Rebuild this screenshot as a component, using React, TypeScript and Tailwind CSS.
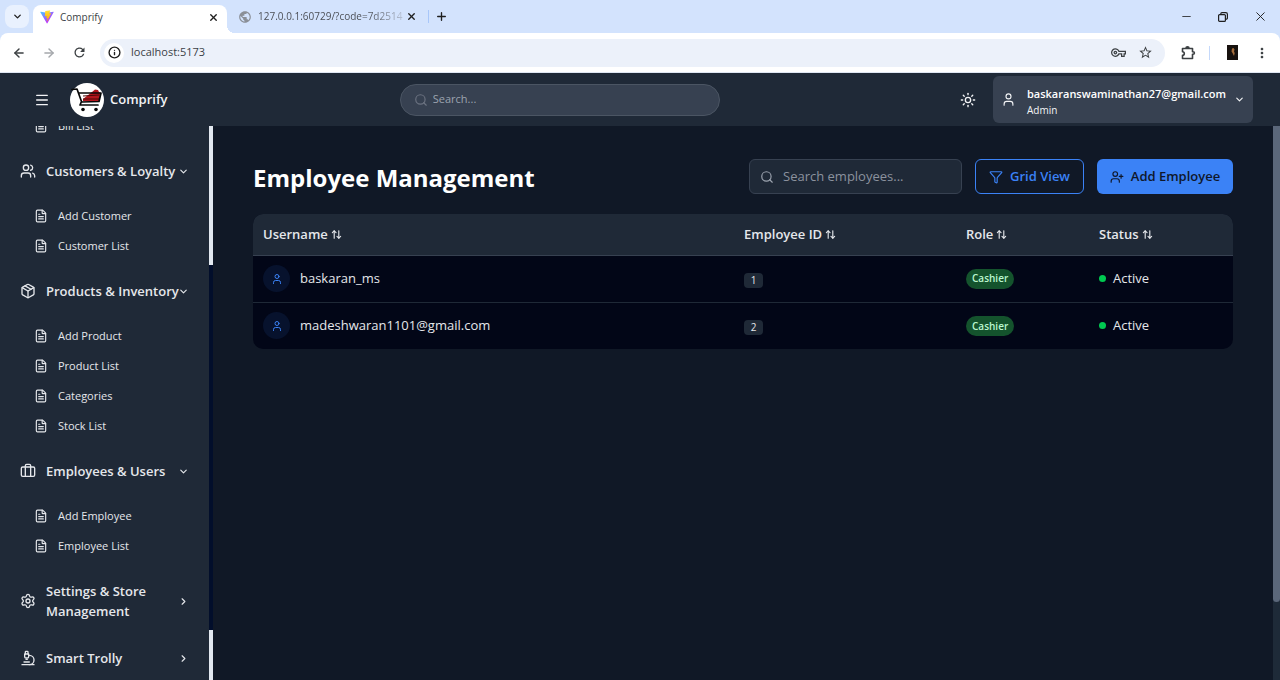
import type { ReactNode } from 'react';
import {
  ArrowLeft,
  ArrowRight,
  ArrowUpDown,
  Briefcase,
  ChevronDown,
  ChevronRight,
  FileText,
  Funnel,
  Info,
  Menu,
  Microscope,
  Minus,
  Package,
  Plus,
  Search,
  Settings,
  Sun,
  User,
  UserPlus,
  Users,
  X,
} from 'lucide-react';
import type { LucideIcon } from 'lucide-react';
import { MdOutlineVpnKey, MdPublic, MdRefresh, MdStarOutline, MdMoreVert } from 'react-icons/md';

function ViteLogo() {
  return (
    <svg viewBox="0 0 410 404" className="size-[14px] shrink-0" aria-hidden="true">
      <defs>
        <linearGradient id="vite-body" x1="6" y1="33" x2="235" y2="344" gradientUnits="userSpaceOnUse">
          <stop stopColor="#41d1ff" />
          <stop offset="1" stopColor="#bd34fe" />
        </linearGradient>
        <linearGradient id="vite-bolt" x1="194" y1="9" x2="236" y2="293" gradientUnits="userSpaceOnUse">
          <stop stopColor="#ffea83" />
          <stop offset="0.1" stopColor="#ffdd35" />
          <stop offset="1" stopColor="#ffa800" />
        </linearGradient>
      </defs>
      <path
        fill="url(#vite-body)"
        d="M399.641 59.525 215.643 388.545c-3.799 6.793-13.559 6.833-17.415.073L10.582 59.556C6.38 52.19 12.68 43.266 21.028 44.76l184.195 32.923c1.175.21 2.378.208 3.553-.006l180.343-32.87c8.32-1.517 14.649 7.337 10.522 14.718Z"
      />
      <path
        fill="url(#vite-bolt)"
        d="M292.965 1.574 156.801 28.255a5 5 0 0 0-4.03 4.611l-8.376 141.464c-.197 3.332 2.863 5.918 6.115 5.168l37.91-8.749c3.547-.818 6.752 2.306 6.023 5.873l-11.263 55.153c-.758 3.712 2.727 6.886 6.352 5.785l23.415-7.114c3.63-1.102 7.118 2.081 6.35 5.796l-17.899 86.633c-1.12 5.419 6.088 8.374 9.094 3.728l2.008-3.103 110.954-221.428c1.858-3.707-1.346-7.935-5.418-7.15l-39.022 7.532c-3.667.707-6.787-2.708-5.752-6.296l25.469-88.291c1.036-3.594-2.095-7.012-5.766-6.293Z"
      />
    </svg>
  );
}

function CartLogo() {
  return (
    <svg viewBox="0 0 34 34" className="size-[34px] shrink-0" aria-hidden="true">
      <circle cx="17" cy="17" r="17" fill="#fff" />
      <path d="m13 16 9-7 3-2.500 3 .5 1 2 2 1-2 9-16-1Z" fill="#b3161d" />
      <path d="m13 13 16-1M13 16h16" stroke="#4d0808" strokeWidth="1" />
      <g fill="none" stroke="#080808" strokeWidth="1.700" strokeLinecap="round" strokeLinejoin="round">
        <path d="M2 6.500 7 6l4.500 12.500-1.500 3.500h18" />
        <path d="M9 10h22l-2 8.500-17 .5" />
      </g>
      <circle cx="13" cy="26.500" r="1.800" fill="#080808" />
      <circle cx="26" cy="26.500" r="1.800" fill="#080808" />
    </svg>
  );
}

function ExtensionIcon() {
  return (
    <svg viewBox="0 0 16 16" className="ml-[15px] size-4 text-[#3c4043]" fill="none" stroke="currentColor" strokeWidth="1.600" strokeLinejoin="round" aria-hidden="true">
      <path d="M2.500 3.500h10v3.200h.6a1.300 1.300 0 0 1 0 2.600h-.6v4.200h-10v-3.200a1.800 1.800 0 0 0 0-3.600Z" />
      <path d="M6 3.200a1.500 1.500 0 0 1 3 0" fill="currentColor" />
    </svg>
  );
}

function BrowserChrome() {
  return (
    <div className="shrink-0 bg-[#d3e3fd] text-[#1f1f1f]">
      <div className="flex h-[33px] items-end">
        <button aria-label="Search tabs" className="mb-[5px] ml-[5px] grid h-[23px] w-6 place-items-center rounded-lg bg-[#e9f1fe]">
          <ChevronDown className="size-[11px]" strokeWidth={3} />
        </button>
        <div className="ml-1 flex h-[28px] w-[194px] items-center rounded-t-lg bg-white pr-[6px] pb-1 pl-[7px]">
          <ViteLogo />
          <span className="ml-[6px] flex-1 text-[10px] text-[#3b3f46]">Comprify</span>
          <button aria-label="Close Comprify tab" className="grid size-4 place-items-center">
            <X className="size-[11px]" strokeWidth={3} />
          </button>
        </div>
        <div className="size-2 bg-[radial-gradient(circle_at_top_right,#d3e3fd_8px,#ffffff_8px)]" />
        <div className="flex h-[33px] w-[193px] items-center pr-[9px] pl-[3px]">
          <MdPublic className="size-[14px] shrink-0 text-[#8a8f97]" />
          <span className="ml-[6px] flex-1 bg-gradient-to-r from-[#474a50] from-75% to-[#b9c4d8] bg-clip-text text-[10px] whitespace-nowrap text-transparent">
            127.0.0.1:60729/?code=7d2514
          </span>
          <button aria-label="Close second tab" className="grid size-4 place-items-center">
            <X className="size-[11px]" strokeWidth={3} />
          </button>
        </div>
        <div className="mb-[10px] h-[13px] w-px bg-[#a8c7fa]" />
        <button aria-label="New tab" className="mb-[10px] ml-[6px] grid size-[13px] place-items-center">
          <Plus className="size-[13px]" strokeWidth={2.5} />
        </button>
        <div className="mb-[9px] ml-auto flex items-center gap-[25px] pr-[12px]">
          <button aria-label="Minimize">
            <Minus className="size-[13px]" strokeWidth={1.5} />
          </button>
          <button aria-label="Restore">
            <svg viewBox="0 0 10 10" className="size-[10px]" fill="none" stroke="currentColor" strokeWidth="1.200">
              <rect x="0.600" y="2.600" width="6.800" height="6.800" rx="1" />
              <path d="M2.800 2.600V1.800A1.200 1.200 0 0 1 4 .6h3.800a1.600 1.600 0 0 1 1.600 1.600V6a1.200 1.200 0 0 1-1.200 1.200h-.8" />
            </svg>
          </button>
          <button aria-label="Close window">
            <X className="size-[15px]" strokeWidth={1.5} />
          </button>
        </div>
      </div>
      <div className="flex h-10 items-center rounded-t-lg border-b border-[#dfe6f2] bg-white">
        <div className="flex items-center gap-4 pl-3 text-[#3c4043]">
          <button aria-label="Back">
            <ArrowLeft className="size-[14px]" strokeWidth={2.5} />
          </button>
          <button aria-label="Forward" className="text-[#a5a8ac]">
            <ArrowRight className="size-[14px]" strokeWidth={2.5} />
          </button>
          <button aria-label="Reload">
            <MdRefresh className="size-[15px]" />
          </button>
        </div>
        <div className="ml-[13px] flex h-7 flex-1 items-center rounded-full bg-[#ecf1fa] pr-3 pl-1">
          <span className="grid size-5 place-items-center rounded-full bg-white">
            <Info className="size-[13px]" strokeWidth={2.5} />
          </span>
          <input
            aria-label="Address"
            defaultValue="localhost:5173"
            className="ml-[7px] min-w-0 flex-1 bg-transparent text-[11px] text-[#3b3f46] outline-none"
          />
          <MdOutlineVpnKey className="size-[15px] text-[#3c4043]" />
          <MdStarOutline className="ml-3 size-[15px] text-[#3c4043]" />
        </div>
        <ExtensionIcon />
        <div className="ml-[13px] h-[14px] w-px bg-[#c5d9fb]" />
        <svg viewBox="0 0 11 15" className="ml-[17px] h-[15px] w-[11px]" aria-hidden="true">
          <rect width="11" height="15" fill="#17110e" />
          <path d="M5 3.500 6.500 3l1 1.500-.5 2 .7 1.500-.7 3-1.500-3-1-1.500Z" fill="#a56d3c" />
        </svg>
        <button aria-label="Browser menu" className="mr-[10px] ml-4">
          <MdMoreVert className="size-4 text-[#3c4043]" />
        </button>
      </div>
    </div>
  );
}

function Header() {
  return (
    <header className="flex h-[53px] shrink-0 items-center justify-between bg-[#1f2937] pr-[27px] pl-[34px] text-[#f3f4f6]">
      <div className="flex items-center">
        <button aria-label="Toggle menu">
          <Menu className="size-4" />
        </button>
        <a href="#home" className="ml-5 flex items-center gap-[6px] text-[13px] font-semibold">
          <CartLogo />
          Comprify
        </a>
      </div>
      <label className="flex h-8 w-80 items-center rounded-full border border-[#4b5563] bg-[#374151] px-[13px] text-[#9ca3af]">
        <Search className="size-[14px] text-[#6b7280]" />
        <input aria-label="Search" placeholder="Search..." className="ml-[5px] min-w-0 flex-1 bg-transparent text-[11px] outline-none placeholder:text-[#9ca3af]" />
      </label>
      <div className="flex items-center">
        <button aria-label="Toggle theme" className="p-2">
          <Sun className="size-4" />
        </button>
        <button className="ml-[9px] flex h-[47px] w-[260px] items-center rounded-md bg-[#374151] px-2 text-left">
          <User className="size-[15px] shrink-0" strokeWidth={1.8} />
          <span className="ml-[11px] flex-1 pt-1">
            <span className="block text-[11px] leading-4 font-semibold text-white">baskaranswaminathan27@gmail.com</span>
            <span className="block text-[10px] leading-4 font-medium">Admin</span>
          </span>
          <ChevronDown className="size-[11px] shrink-0" strokeWidth={2.5} />
        </button>
      </div>
    </header>
  );
}

function SubItem({ label }: { label: string }) {
  return (
    <li>
      <a href="#page" className="flex h-[30px] items-center gap-[10px] pl-[34px] text-[11px]">
        <FileText className="size-[14px]" />
        {label}
      </a>
    </li>
  );
}

type SectionProps = { icon: LucideIcon; label: string; items?: string[] };

function Section({ icon: Icon, label, items }: SectionProps) {
  const Chevron = items ? ChevronDown : ChevronRight;
  return (
    <li>
      <button aria-expanded={Boolean(items)} className="flex min-h-10 w-full items-center py-[10px] pr-5 pl-5 text-left text-[13px] leading-5 font-[550]">
        <Icon className="size-4 shrink-0" />
        <span className="-mr-2 ml-[10px] flex-1">{label}</span>
        <Chevron className="size-[11px] shrink-0" strokeWidth={2.5} />
      </button>
      {items && (
        <ul className="mt-[10px] mb-[3px]">
          {items.map((item) => (
            <SubItem key={item} label={item} />
          ))}
        </ul>
      )}
    </li>
  );
}

const sections: SectionProps[] = [
  { icon: Users, label: 'Customers & Loyalty', items: ['Add Customer', 'Customer List'] },
  { icon: Package, label: 'Products & Inventory', items: ['Add Product', 'Product List', 'Categories', 'Stock List'] },
  { icon: Briefcase, label: 'Employees & Users', items: ['Add Employee', 'Employee List'] },
  { icon: Settings, label: 'Settings & Store Management' },
  { icon: Microscope, label: 'Smart Trolly' },
];

function Sidebar() {
  return (
    <aside className="flex w-[213px] shrink-0 overflow-hidden">
      <nav className="flex-1 overflow-hidden bg-[#1f2937] text-[#e5e7eb]">
        <ul className="-mt-[15px] mb-[10px]">
          <SubItem label="Bill List" />
        </ul>
        <ul className="flex flex-col gap-[7px]">
          {sections.map((section) => (
            <Section key={section.label} {...section} />
          ))}
        </ul>
      </nav>
      <div className="flex w-1 flex-col bg-[#e2e8f0]">
        <div className="h-[25%]" />
        <div className="h-[66%] bg-[#020e2b]" />
      </div>
    </aside>
  );
}

const employees = [
  { name: 'baskaran_ms', id: 1, role: 'Cashier', status: 'Active' },
  { name: 'madeshwaran1101@gmail.com', id: 2, role: 'Cashier', status: 'Active' },
];

function HeadCell({ children, className = '' }: { children: ReactNode; className?: string }) {
  return (
    <th scope="col" className={`px-[10px] text-left font-[550] ${className}`}>
      <button className="flex items-center gap-[3px]">
        {children}
        <ArrowUpDown className="size-[11px]" strokeWidth={2.5} />
      </button>
    </th>
  );
}

function EmployeeTable() {
  return (
    <div className="mt-5 overflow-hidden rounded-[10px] bg-[#020617]">
      <table className="w-full table-fixed text-[13px] text-[#e5e7eb]">
        <thead className="bg-[#1f2937]">
          <tr className="h-[41px] border-b border-[#374151]">
            <HeadCell>Username</HeadCell>
            <HeadCell className="w-[222px]">Employee ID</HeadCell>
            <HeadCell className="w-[133px]">Role</HeadCell>
            <HeadCell className="w-[144px]">Status</HeadCell>
          </tr>
        </thead>
        <tbody>
          {employees.map((employee) => (
            <tr key={employee.id} className="h-[47px] border-b border-[#1f2937] last:border-b-0">
              <td className="px-[10px]">
                <div className="flex items-center gap-[10px]">
                  <span className="grid size-[27px] place-items-center rounded-full bg-[#07122d] text-[#3b82f6]">
                    <User className="size-3" />
                  </span>
                  {employee.name}
                </div>
              </td>
              <td className="px-[10px]">
                <span className="mt-1 grid h-[15px] w-[19px] place-items-center rounded-sm bg-[#1f2937] text-[10px]">{employee.id}</span>
              </td>
              <td className="px-[10px]">
                <span className="inline-grid h-5 place-items-center rounded-full bg-[#14532d] px-[6px] text-[10px] font-semibold text-[#bbf7d0]">
                  {employee.role}
                </span>
              </td>
              <td className="px-[10px]">
                <span className="flex items-center gap-[7px]">
                  <span className="size-[7px] rounded-full bg-[#00c951]" />
                  {employee.status}
                </span>
              </td>
            </tr>
          ))}
        </tbody>
      </table>
    </div>
  );
}

export default function App() {
  return (
    <div className="flex h-screen flex-col overflow-hidden bg-[#101826] font-['Open_Sans','Noto_Sans',sans-serif]">
      <BrowserChrome />
      <Header />
      <div className="flex min-h-0 flex-1">
        <Sidebar />
        <main className="min-w-0 flex-1 overflow-hidden px-10 pt-[33px]">
          <div className="flex items-center gap-[13px]">
            <h1 className="flex-1 pt-[3px] text-2xl leading-8 font-bold whitespace-nowrap text-white">Employee Management</h1>
            <label className="flex h-[35px] w-[213px] items-center rounded-md border border-[#374151] bg-[#1f2937] px-[10px] text-[#9ca3af]">
              <Search className="size-[14px] shrink-0" />
              <input
                aria-label="Search employees"
                placeholder="Search employees..."
                className="ml-[9px] min-w-0 flex-1 bg-transparent text-[13px] outline-none placeholder:text-[#8b929e]"
              />
            </label>
            <button className="flex h-[35px] w-[109px] items-center justify-center gap-[7px] rounded-md border border-[#3b82f6] text-[13px] font-[550] whitespace-nowrap text-[#3b82f6]">
              <Funnel className="size-[14px] shrink-0" />
              Grid View
            </button>
            <button className="flex h-[35px] w-[136px] items-center justify-center gap-[7px] rounded-md bg-[#3b82f6] text-[13px] font-[550] whitespace-nowrap text-[#0f172a]">
              <UserPlus className="size-[14px] shrink-0" />
              Add Employee
            </button>
          </div>
          <EmployeeTable />
        </main>
        <div className="w-[7px] shrink-0 bg-[#1e2a38]">
          <div className="h-[86%] rounded-b-sm bg-[#5b677a]" />
        </div>
      </div>
    </div>
  );
}
